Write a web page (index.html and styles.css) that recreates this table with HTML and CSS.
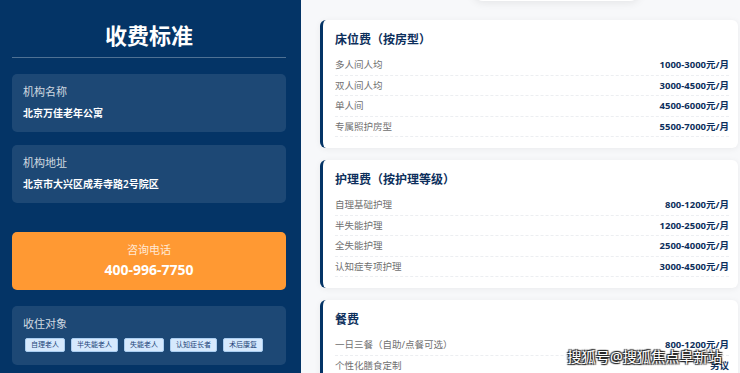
FILE: index.html
```html
<!DOCTYPE html>
<html lang="zh-CN">
<head>
    <meta charset="UTF-8">
    <meta name="viewport" content="width=device-width, initial-scale=1.0">
    <title>收费标准</title>
    <link rel="stylesheet" href="styles.css">
</head>
<body>

<div class="sidebar">
    <h1>收费标准</h1>
    <div class="info-card">
        <div class="info-label">机构名称</div>
        <div class="info-value">北京万佳老年公寓</div>
    </div>
    <div class="info-card">
        <div class="info-label">机构地址</div>
        <div class="info-value">北京市大兴区成寿寺路2号院区</div>
    </div>
    <div class="phone-card">
        <div class="phone-label">咨询电话</div>
        <div class="phone-number">400-996-7750</div>
    </div>
    <div class="info-card target-card">
        <div class="info-label">收住对象</div>
        <div class="tags">
            <span class="tag">自理老人</span>
            <span class="tag">半失能老人</span>
            <span class="tag">失能老人</span>
            <span class="tag">认知症长者</span>
            <span class="tag">术后康复</span>
        </div>
    </div>
</div>

<div class="main">
    <div class="top-pill"></div>

    <div class="fee-card">
        <h2>床位费（按房型）</h2>
        <div class="fee-row"><span class="fee-name">多人间人均</span><span class="fee-price">1000-3000元/月</span></div>
        <div class="fee-row"><span class="fee-name">双人间人均</span><span class="fee-price">3000-4500元/月</span></div>
        <div class="fee-row"><span class="fee-name">单人间</span><span class="fee-price">4500-6000元/月</span></div>
        <div class="fee-row"><span class="fee-name">专属照护房型</span><span class="fee-price">5500-7000元/月</span></div>
    </div>

    <div class="fee-card">
        <h2>护理费（按护理等级）</h2>
        <div class="fee-row"><span class="fee-name">自理基础护理</span><span class="fee-price">800-1200元/月</span></div>
        <div class="fee-row"><span class="fee-name">半失能护理</span><span class="fee-price">1200-2500元/月</span></div>
        <div class="fee-row"><span class="fee-name">全失能护理</span><span class="fee-price">2500-4000元/月</span></div>
        <div class="fee-row"><span class="fee-name">认知症专项护理</span><span class="fee-price">3000-4500元/月</span></div>
    </div>

    <div class="fee-card">
        <h2>餐费</h2>
        <div class="fee-row"><span class="fee-name">一日三餐（自助/点餐可选）</span><span class="fee-price">800-1200元/月</span></div>
        <div class="fee-row"><span class="fee-name">个性化膳食定制</span><span class="fee-price">另议</span></div>
    </div>
</div>

<div class="watermark">搜狐号@搜狐焦点阜新站</div>

</body>
</html>
```

FILE: styles.css
```css
body {
    font-family: "Noto Sans", "Noto Sans CJK SC", sans-serif;
    margin: 0;
    height: 373px;
    overflow: hidden;
    display: flex;
    background-color: #f7f8fa;
}
.sidebar {
    width: 301px;
    flex-shrink: 0;
    box-sizing: border-box;
    padding: 0 15px 0 12px;
    background-color: #043466;
    color: white;
}
.sidebar h1 {
    margin: 0 0 16px;
    padding: 19px 0 6px;
    font-size: 22px;
    line-height: 32px;
    text-align: center;
    border-bottom: 1px solid rgba(255,255,255,0.3);
}
.info-card {
    background-color: rgba(255,255,255,0.1);
    border-radius: 5px;
    padding: 10px 11px 11px;
    margin-bottom: 13px;
}
.info-label {
    font-size: 11px;
    line-height: 16px;
    color: rgba(255,255,255,0.8);
}
.info-value {
    margin-top: 5px;
    font-size: 10px;
    line-height: 16px;
    font-weight: 600;
}
.phone-card {
    margin-top: 29px;
    background-color: #ff9933;
    border-radius: 5px;
    padding: 10px 11px;
    text-align: center;
}
.phone-label {
    font-size: 11px;
    line-height: 16px;
    color: rgba(255,255,255,0.8);
}
.phone-number {
    margin-top: 2px;
    font-size: 14px;
    line-height: 20px;
    font-weight: 700;
}
.target-card {
    margin-top: 16px;
    padding-bottom: 13px;
}
.tags {
    display: flex;
    gap: 6px;
    margin: 6px 0 0 2px;
}
.tag {
    font-size: 7px;
    line-height: 12px;
    padding: 0 5px;
    color: #1d4478;
    background-color: #d6e9fd;
    border: 1px solid #aacdf0;
    border-radius: 2px;
}
.main {
    flex: 1;
    padding: 0 2px 0 19px;
}
.top-pill {
    width: 167px;
    height: 20px;
    margin: -19px 0 0 153px;
    background-color: white;
    border-radius: 10px;
    box-shadow: 0 2px 8px rgba(0,0,0,0.08);
}
.fee-card {
    margin-top: 19px;
    background-color: white;
    border-left: 3px solid #043466;
    border-radius: 6px;
    box-shadow: 0 1px 6px rgba(0,0,0,0.06);
    padding: 11px 9px 11px 12px;
}
.fee-card + .fee-card {
    margin-top: 12px;
}
.fee-card h2 {
    margin: 0 0 6px;
    font-size: 12px;
    line-height: 18px;
    color: #0d2f5c;
}
.fee-row {
    display: flex;
    justify-content: space-between;
    padding: 3px 0;
    font-size: 9.5px;
    line-height: 13.5px;
    border-bottom: 1px dashed #eceef1;
}
.fee-name {
    color: #707070;
}
.fee-price {
    color: #0d2f5c;
    font-weight: 700;
}
.watermark {
    position: absolute;
    right: 18px;
    bottom: 7px;
    font-size: 14.2px;
    line-height: 18px;
    color: white;
    text-shadow: 1px 1px 1px #222, -1px -1px 1px #222, 1px -1px 1px #222, -1px 1px 1px #222;
}
```
